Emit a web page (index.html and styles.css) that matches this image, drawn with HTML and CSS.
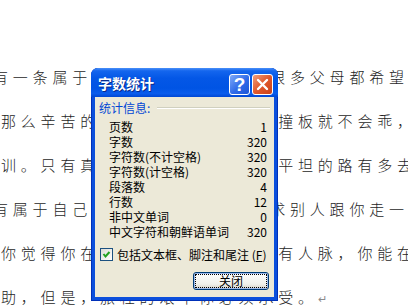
FILE: index.html
```html
<!DOCTYPE html>
<html lang="zh-CN">
<head>
    <meta charset="UTF-8">
    <meta name="viewport" content="width=device-width, initial-scale=1.0">
    <title>字数统计</title>
    <link rel="stylesheet" href="styles.css">
</head>
<body>

    <!-- Document text behind the dialog -->
    <div class="doc">
        <div class="line cut">有一条属于你自己的路，但是有很多父母都希望孩子</div>
        <div class="line">那么辛苦的路，总以为孩子不曾撞板就不会乖，</div>
        <div class="line">训。只有真正经历过的人才知道平坦的路有多去</div>
        <div class="line cut">有属于自己的路，不要总是去要求别人跟你走一</div>
        <div class="line">你觉得你在这条路上没有背景没有人脉，你能在</div>
        <div class="line">助，但是，旅程的艰辛你必须承受。<span class="para-mark">↵</span></div>
    </div>

    <!-- Word count dialog -->
    <div class="dialog">
        <div class="titlebar">
            <span class="title">字数统计</span>
            <div class="caption-buttons">
                <span class="cap-btn help">?</span>
                <span class="cap-btn close">
                    <svg width="19" height="19" viewBox="0 0 19 19">
                        <path d="M5 5 L14 14 M14 5 L5 14" stroke="#ffffff" stroke-width="2.4" stroke-linecap="round"/>
                    </svg>
                </span>
            </div>
        </div>

        <div class="dialog-body">
            <div class="group-head">
                <span>统计信息:</span>
                <span class="rule"></span>
            </div>

            <div class="stats">
                <div class="stat"><span>页数</span><span>1</span></div>
                <div class="stat"><span>字数</span><span>320</span></div>
                <div class="stat"><span>字符数(不计空格)</span><span>320</span></div>
                <div class="stat"><span>字符数(计空格)</span><span>320</span></div>
                <div class="stat"><span>段落数</span><span>4</span></div>
                <div class="stat"><span>行数</span><span>12</span></div>
                <div class="stat"><span>非中文单词</span><span>0</span></div>
                <div class="stat"><span>中文字符和朝鲜语单词</span><span>320</span></div>
            </div>

            <label class="check">
                <span class="box">
                    <svg width="11" height="11" viewBox="0 0 11 11">
                        <path d="M2.5 5 L4.5 7.5 L8.5 3" fill="none" stroke="#21a121" stroke-width="2"/>
                    </svg>
                </span>
                <span class="check-text">包括文本框、脚注和尾注 (<u>F</u>)</span>
            </label>

            <div class="actions">
                <button class="btn"><span class="focus">关闭</span></button>
            </div>
        </div>
    </div>

</body>
</html>
```

FILE: styles.css
```css
/* Page */
body {
    margin: 0;
    width: 408px;
    height: 306px;
    overflow: hidden;
    position: relative;
    background: #ffffff;
    font-family: "Noto Sans CJK SC", sans-serif;
}

/* Document text */
.doc {
    height: 306px;
    overflow: hidden;
    padding-top: 55px;
    box-sizing: border-box;
}

.line {
    height: 44px;
    line-height: 44px;
    margin-left: 1px;
    white-space: nowrap;
    font-size: 15px;
    font-weight: 300;
    letter-spacing: 4.8px;
    color: #1e1e1e;
}

.line.cut {
    margin-left: -7px;
}

.para-mark {
    font-family: "DejaVu Sans", sans-serif;
    font-size: 11px;
    letter-spacing: 0;
    color: #8a8a8a;
}

/* Dialog window */
.dialog {
    position: absolute;
    left: 91px;
    top: 68px;
    width: 187px;
    display: flex;
    flex-direction: column;
    background: #0b4fdc;
    border-radius: 7px 7px 0 0;
    box-shadow: inset 0 0 0 1px #0030b8;
}

.titlebar {
    height: 29px;
    box-sizing: border-box;
    padding: 5px 5px 0 7px;
    display: flex;
    justify-content: space-between;
    align-items: flex-start;
    border-radius: 7px 7px 0 0;
    background: linear-gradient(to bottom, #4a90f8 0%, #1466ee 10%, #0457e6 35%, #0054e4 70%, #0a5cec 88%, #0047d4 100%);
}

.title {
    line-height: 21px;
    font-size: 14px;
    font-weight: bold;
    color: #ffffff;
    text-shadow: 1px 1px 0 #0a2a8a;
}

.caption-buttons {
    display: flex;
    gap: 2px;
    margin-top: 1px;
}

.cap-btn {
    width: 19px;
    height: 19px;
    border: 1px solid #ffffff;
    border-radius: 3px;
    display: flex;
    align-items: center;
    justify-content: center;
}

.help {
    background: linear-gradient(to bottom right, #7eaaf9, #2f6ae8 55%, #1d55d6);
    color: #ffffff;
    font-family: "Liberation Sans", sans-serif;
    font-weight: bold;
    font-size: 19px;
}

.close {
    background: linear-gradient(to bottom right, #f0a07e, #e0582c 50%, #c9421a);
}

/* Dialog body */
.dialog-body {
    margin: 0 4px 4px;
    padding: 3px 4px 7px;
    background: #ece9d8;
    font-size: 12px;
    color: #000000;
}

.group-head {
    display: flex;
    align-items: center;
    height: 15px;
    color: #0046d5;
}

.rule {
    flex: 1;
    margin-left: 7px;
    border-top: 1px solid #d0d0bf;
    border-bottom: 1px solid #ffffff;
}

.stats {
    margin-top: 4px;
    padding: 0 3px 0 10px;
}

.stat {
    display: flex;
    justify-content: space-between;
    height: 15px;
    line-height: 15px;
}

.check {
    margin: 8px 0 0 1px;
    height: 14px;
    display: flex;
    align-items: center;
    gap: 4px;
}

.check-text {
    white-space: nowrap;
}

.check u {
    text-decoration: underline;
}

.box {
    width: 11px;
    height: 11px;
    border: 1px solid #1c5180;
    background: linear-gradient(to bottom right, #dcdcd7, #ffffff);
    display: flex;
}

.actions {
    margin-top: 11px;
    padding-right: 1px;
    display: flex;
    justify-content: flex-end;
}

.btn {
    width: 76px;
    height: 18px;
    padding: 1px;
    border: 1px solid #003c74;
    border-radius: 3px;
    background: linear-gradient(to bottom, #ffffff, #f0f0ea 70%, #d6d0c5);
    box-shadow: inset 0 0 0 1px #9db9eb;
    font-family: "Noto Sans CJK SC", sans-serif;
    font-size: 12px;
    color: #000000;
    display: flex;
}

.focus {
    flex: 1;
    border: 1px dotted #000000;
    line-height: 12px;
    text-align: center;
}
```
